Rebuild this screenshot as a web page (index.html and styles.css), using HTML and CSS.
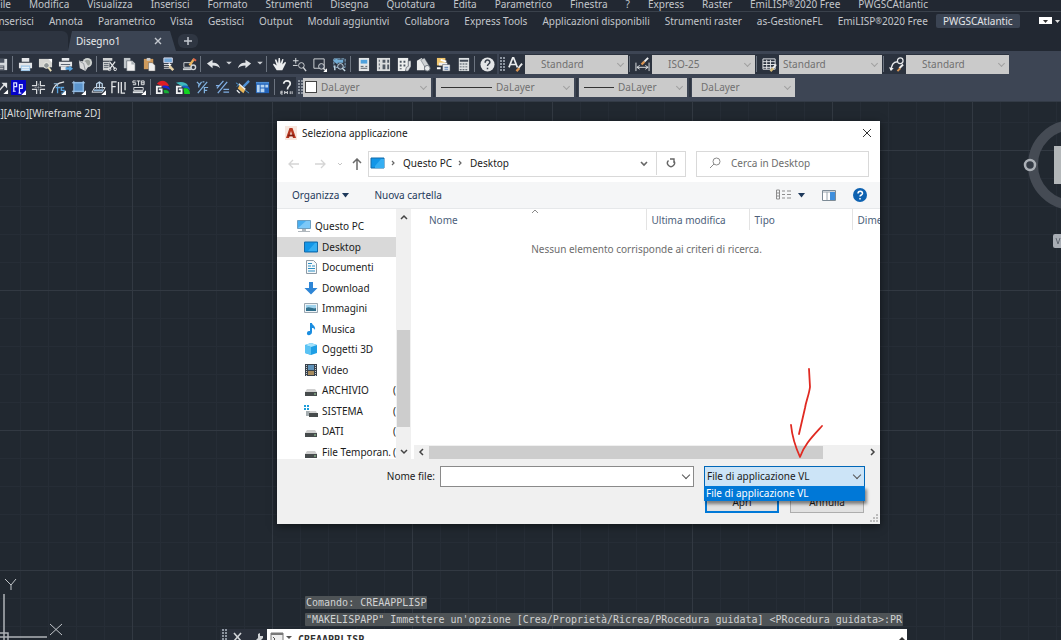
FILE: index.html
```html
<!DOCTYPE html>
<html lang="it">
<head>
    <meta charset="UTF-8">
    <meta name="viewport" content="width=device-width, initial-scale=1.0">
    <title>Seleziona applicazione</title>
    <link rel="stylesheet" href="styles.css">
</head>
<body>
    <header class="app-header">
        <nav class="menu-bar">
            <a href="#">File</a><a href="#">Modifica</a><a href="#">Visualizza</a><a href="#">Inserisci</a><a href="#">Formato</a><a href="#">Strumenti</a><a href="#">Disegna</a><a href="#">Quotatura</a><a href="#">Edita</a><a href="#">Parametrico</a><a href="#">Finestra</a><a href="#">?</a><a href="#">Express</a><a href="#">Raster</a><a href="#">EmiLISP<small>®</small>2020 Free</a><a href="#">PWGSCAtlantic</a>
        </nav>
        <nav class="ribbon-tabs">
            <a href="#">Inserisci</a><a href="#">Annota</a><a href="#">Parametrico</a><a href="#">Vista</a><a href="#">Gestisci</a><a href="#">Output</a><a href="#">Moduli aggiuntivi</a><a href="#">Collabora</a><a href="#">Express Tools</a><a href="#">Applicazioni disponibili</a><a href="#">Strumenti raster</a><a href="#">as-GestioneFL</a><a href="#">EmiLISP<small>®</small>2020 Free</a><a href="#" class="active">PWGSCAtlantic</a>
            <button class="ribbon-toggle" aria-label="Riduci barra multifunzione">
                <svg width="22" height="8" viewBox="0 0 22 8"><rect width="13" height="7" fill="#fff"/><path d="M4 3h5l-2.500 3z" fill="#333"/><path d="M16 3h5l-2.500 3z" fill="#ddd"/></svg>
            </button>
        </nav>
        <div class="file-tabs">
            <div class="tab-start"></div>
            <div class="file-tab">
                <span>Disegno1</span>
                <button aria-label="Chiudi disegno"><svg width="8" height="8" viewBox="0 0 8 8"><path d="M1 1l6 6M7 1L1 7" stroke="#c3c8cf" stroke-width="1.400"/></svg></button>
            </div>
            <button class="new-tab" aria-label="Nuovo disegno"><svg width="8" height="8" viewBox="0 0 8 8"><path d="M4 0v8M0 4h8" stroke="#c3c8cf" stroke-width="1.500"/></svg></button>
        </div>
    </header>

    <div class="toolbars">
        <div class="tool-row">
            <div class="tools">
                <button class="tool cut-off" aria-label="Salva"><svg viewBox="0 0 16 16"><path d="M1 2h13v12H1z" fill="#d5d9dd"/><path d="M4 2h7v4H4zM4 9h7v5H4z" fill="#4a5260"/><path d="M5 10h5v1H5zM5 12h5v1H5z" fill="#ddd"/></svg></button>
                <i class="sep"></i>
                <button class="tool" aria-label="Stampa"><svg viewBox="0 0 16 16"><path d="M4 1h8v4H4zM1 6h14v6H1z" fill="#e4e6e8"/><path d="M3 9h10v6H3z" fill="#9fc6e6"/><path d="M4 11h8M4 13h8" stroke="#fff"/></svg></button>
                <button class="tool" aria-label="Anteprima di stampa"><svg viewBox="0 0 16 16"><path d="M1 2h14v9H1z" fill="#d6d6d2"/><path d="M11 2l4 4V2z" fill="#fff"/><circle cx="9" cy="9" r="3" fill="#8f9596" stroke="#f0f0e8"/><path d="M11 11l3 4" stroke="#e6dcb4" stroke-width="2"/></svg></button>
                <button class="tool" aria-label="Pubblica"><svg viewBox="0 0 16 16"><path d="M4 1h8v3H4zM1 5h14v5H1z" fill="#e4e6e8"/><path d="M3 8h10" stroke="#525c69"/><path d="M3 10h6v4H3z" fill="#e4e6e8"/><path d="M8 11h4V9l4 3.500-4 3V13.500H8z" fill="#5aa5e0"/></svg></button>
                <button class="tool" aria-label="Stampa 3D"><svg viewBox="0 0 16 16"><circle cx="10" cy="6" r="5" fill="#cfd3d0"/><circle cx="10" cy="6" r="3" fill="#9ca19d"/><path d="M1 4l7 1 3 5-3 5-6-3z" fill="#d9dadb"/><path d="M1 4l5 3 2 8" stroke="#8c9297" fill="none"/></svg></button>
                <i class="sep"></i>
                <button class="tool" aria-label="Taglia"><svg viewBox="0 0 16 16"><path d="M1 1h10v3H1zM1 5h7v9H1z" fill="#d0d2d3"/><path d="M2 7h5M2 9h5M2 11h5" stroke="#59616c"/><path d="M8 5l6 8M14 5l-6 8" stroke="#e6e8ea" stroke-width="1.300"/><circle cx="8" cy="13" r="1.500" fill="none" stroke="#e6e8ea"/><circle cx="14" cy="13" r="1.500" fill="none" stroke="#e6e8ea"/></svg></button>
                <button class="tool" aria-label="Copia"><svg viewBox="0 0 16 16"><path d="M2 1h7v11H2z" fill="#bfc4c8"/><path d="M5 4h6l3 3v8H5z" fill="#f0f0f0" stroke="#444c58" stroke-width=".6"/><path d="M10 4v4h4" fill="#aab0b5"/></svg></button>
                <button class="tool" aria-label="Incolla"><svg viewBox="0 0 16 16"><path d="M2 2h10v11H2z" fill="#cf9a5c"/><path d="M5 1h4v3H5z" fill="#ccc"/><path d="M7 6h4l3 3v6H7z" fill="#f0f0f0" stroke="#555" stroke-width=".5"/></svg></button>
                <button class="tool" aria-label="Corrispondenza proprietà"><svg viewBox="0 0 16 16"><path d="M2 1h9v5H2z" fill="#74a9d9" stroke="#dde" /><path d="M2 8h8M2 10h8M2 12h7" stroke="#e0e0e0"/><path d="M8 8l5 5-2 2-4-4z" fill="#e7d2a6"/><path d="M7 7l2 2" stroke="#fff" stroke-width="2"/></svg></button>
                <button class="tool" aria-label="Editor blocchi"><svg viewBox="0 0 16 16"><path d="M2 6h8v5H2z" fill="none" stroke="#cfd3d6"/><path d="M1 13h9" stroke="#cfd3d6" stroke-width="2"/><circle cx="12" cy="11" r="2.500" fill="none" stroke="#cfd3d6" stroke-width="1.500"/><path d="M8 9l5-7" stroke="#e8b25c" stroke-width="2.500"/><path d="M12 2l3 2" stroke="#e0654a" stroke-width="2"/></svg></button>
                <i class="sep"></i>
                <button class="tool" aria-label="Annulla ultimo"><svg viewBox="0 0 16 16"><path d="M1 7l6-4v3c5 0 7 2 8 6-2-2-4-3-8-3v3z" fill="#e0e3e6"/></svg></button>
                <button class="tool narrow" aria-label="Elenco annulla"><svg viewBox="0 0 8 16"><path d="M1 5h6L4 8z" fill="#cdd1d6"/></svg></button>
                <button class="tool" aria-label="Ripeti"><svg viewBox="0 0 16 16"><path d="M15 7L9 3v3C4 6 2 8 1 12c2-2 4-3 8-3v3z" fill="#e0e3e6"/></svg></button>
                <button class="tool narrow" aria-label="Elenco ripeti"><svg viewBox="0 0 8 16"><path d="M1 5h6L4 8z" fill="#cdd1d6"/></svg></button>
                <i class="sep"></i>
                <button class="tool" aria-label="Pan"><svg viewBox="0 0 16 16"><path d="M5 14L1 8l1-1 3 2-2-6 1.500-.5L6.500 7 7 1h1.500l.5 6 2-5 1.300.5L11 8l3-3 1 1-4 8z" fill="#eceeef"/></svg></button>
                <button class="tool" aria-label="Zoom tempo reale"><svg viewBox="0 0 16 16"><path d="M1 4h6M4 1v6M1 9h5" stroke="#e0e3e6"/><circle cx="10" cy="9" r="3" fill="none" stroke="#d3d6da"/><path d="M12 11l3 4" stroke="#d3d6da" stroke-width="1.500"/></svg></button>
                <button class="tool" aria-label="Zoom finestra"><svg viewBox="0 0 16 16"><path d="M2 2h11v10H2z" fill="none" stroke="#d3d6da"/><circle cx="10" cy="10" r="3" fill="#3a4352" stroke="#d3d6da"/><path d="M12 12l3 3" stroke="#d3d6da" stroke-width="1.500"/><path d="M16 12v4h-4z" fill="#fff"/></svg></button>
                <button class="tool" aria-label="Zoom precedente"><svg viewBox="0 0 16 16"><path d="M2 2h12v9H2z" fill="none" stroke="#8fb9d6" stroke-dasharray="3 1"/><path d="M1 4l5-3v2h6v3H6v2z" fill="#71add5"/><circle cx="9" cy="10" r="3" fill="#3a4352" stroke="#c8dce8"/><path d="M11 12l3 3M3 9v5" stroke="#c8dce8" stroke-width="1.500"/></svg></button>
                <i class="sep"></i>
                <button class="tool" aria-label="Proprietà"><svg viewBox="0 0 16 16"><path d="M3 1h11v14H3z" fill="#e2e5e7"/><path d="M5 3h7v4H5z" fill="#4fa1dd"/><path d="M5 10h3M10 10h2M5 12h7" stroke="#4d5661"/></svg></button>
                <button class="tool" aria-label="DesignCenter"><svg viewBox="0 0 16 16"><path d="M1 1h14v14H1z" fill="#d9dbdc"/><path d="M3 3h1v2H3zM3 7h1v2H3zM3 11h1v2H3zM7 3h3v3H7zM12 3h2v3h-2zM7 8h3v5H7zM12 8h2v5h-2z" fill="#505964"/></svg></button>
                <button class="tool" aria-label="Tavolozze degli strumenti"><svg viewBox="0 0 16 16"><path d="M2 1h11v14H2z" fill="#eceeee"/><path d="M4 4h2v2H4zM8 4h2v2H8zM4 8h2v2H4zM8 8h2v2H8zM4 12h2v1H4z" fill="#4d5661"/><path d="M10 15l1-4 2-1V4h3v6l-3 5z" fill="#dfe2e4" stroke="#39414d" stroke-width=".6"/></svg></button>
                <button class="tool" aria-label="Gestione gruppi di fogli"><svg viewBox="0 0 16 16"><path d="M1 4l5-3 3 4v9H1z" fill="#eceded"/><path d="M5 3l4-2 6 10-3 4z" fill="#cfd2d4" stroke="#4b535f" stroke-width=".5"/><circle cx="12" cy="12" r="3" fill="#e7e9ea" stroke="#6a717a"/></svg></button>
                <button class="tool" aria-label="Gestione marcature"><svg viewBox="0 0 16 16"><path d="M1 1h9v8H1z" fill="#f0c56c"/><path d="M3 6h9v3H3z" fill="#eee"/><path d="M7 8h8v7H7z" fill="#e9ebee" stroke="#39414d" stroke-width=".5"/><path d="M9 11h4M9 13h4" stroke="#4a72ab"/><path d="M1 12h4M5 3l6 2" stroke="#fff" stroke-width="2"/></svg></button>
                <button class="tool" aria-label="Calcolatrice"><svg viewBox="0 0 16 16"><path d="M3 1h11v14H3z" fill="#dde0e2"/><path d="M4 3h9v2H4zM4 7h2v1H4zM7 7h2v1H7zM10 7h2v1h-2zM4 10h2v1H4zM7 10h2v1H7zM10 10h2v1h-2zM4 13h2v1H4zM7 13h2v1H7zM10 13h2v1h-2z" fill="#414a57"/></svg></button>
                <i class="sep"></i>
                <button class="tool" aria-label="Guida"><svg viewBox="0 0 16 16"><circle cx="8" cy="8" r="7.500" fill="#e3e5e7"/><path d="M5.500 6c0-3.500 5-3.500 5-.5 0 2-2.500 2-2.500 4M8 11.500v1.500" stroke="#39414d" stroke-width="1.600" fill="none"/></svg></button>
            </div>
            <div class="tools">
                <i class="grip"></i>
                <button class="tool" aria-label="Stile testo"><svg viewBox="0 0 16 16"><path d="M1 11L5 1h1l4 10M3 8h5" stroke="#e8eaec" stroke-width="1.800" fill="none"/><path d="M11 12l4-5" stroke="#e8eaec" stroke-width="2"/><path d="M9 15l3-3" stroke="#d99452" stroke-width="2.500"/></svg></button>
                <div class="combo"><select class="indent" aria-label="Stile testo corrente"><option>Standard</option></select></div>
                <i class="sep"></i>
                <button class="tool" aria-label="Stile di quota"><svg viewBox="0 0 16 16"><path d="M1 6v9M15 6v9M2 11h12M5 9l-3 2 3 2M11 9l3 2-3 2" stroke="#dfe2e5" fill="none"/><path d="M10 5l4-4" stroke="#eee" stroke-width="2"/><path d="M7 8l3-3" stroke="#d99452" stroke-width="2.500"/></svg></button>
                <div class="combo"><select class="indent" aria-label="Stile di quota corrente"><option>ISO-25</option></select></div>
                <i class="sep"></i>
                <button class="tool" aria-label="Stile tabella"><svg viewBox="0 0 16 16"><path d="M1 2h13v11H1zM1 5h13M1 8h13M1 11h13M5 3v10M9 3v10" stroke="#e8eaec" fill="none"/><path d="M11 13l4-5" stroke="#eee" stroke-width="2"/><path d="M9 15l3-3" stroke="#d8bd78" stroke-width="2.500"/></svg></button>
                <div class="combo"><select aria-label="Stile tabella corrente"><option>Standard</option></select></div>
                <i class="sep"></i>
                <button class="tool" aria-label="Stile direttrice"><svg viewBox="0 0 16 16"><path d="M2 14c1-5 2-9 7-9" stroke="#e8eaec" fill="none" stroke-width="1.500"/><path d="M0 11l2 4 3-3" fill="#eee"/><circle cx="12" cy="4" r="3" stroke="#e8eaec" fill="none" stroke-width="1.300"/><path d="M11 12l4-4" stroke="#eee" stroke-width="2"/><path d="M9 15l3-3" stroke="#d99452" stroke-width="2"/></svg></button>
                <div class="combo"><select class="indent" aria-label="Stile direttrice corrente"><option>Standard</option></select></div>
            </div>
        </div>

        <div class="tool-row">
            <div class="tools">
                <button class="tool cut-off" aria-label="Direttrice"><svg viewBox="0 0 16 16"><path d="M4 13l8-9" stroke="#ddd" stroke-width="1.500"/><path d="M8 3h6v6z" fill="#e4e6e8"/><path d="M15 10v5h-5z" fill="#fff"/></svg></button>
                <button class="tool after-cut" aria-label="Polilinee"><svg viewBox="0 0 16 16"><path d="M0 0h16v16H0z" fill="#0503c8"/><path d="M3 12V3h3v4H3M9 14V5h3v4H9M2 12h3M8 14h3" stroke="#dfe3ff" fill="none" stroke-width="1.300"/><path d="M16 11v5h-5z" fill="#fff"/></svg></button>
                <button class="tool" aria-label="Interseca muri"><svg viewBox="0 0 16 16"><path d="M1 6h5V1M10 1v5h5M1 10h5v5M10 15v-5h5" stroke="#d9dcdf" fill="none" stroke-width="1.300"/><path d="M8 4v8M4 8h8" stroke="#aab0b6" stroke-dasharray="1 1"/></svg></button>
                <button class="tool" aria-label="Testo su arco"><svg viewBox="0 0 16 16"><path d="M1 14C2 7 7 3 14 2" stroke="#dfe2e5" fill="none" stroke-width="1.300"/><path d="M5 8h5M7 8v6M14 8h-3v3h3v3h-3" stroke="#58a2df" fill="none" stroke-width="1.400"/><path d="M3 4h4v3" stroke="#9dc6e8" fill="none"/><path d="M16 11v5h-5z" fill="#fff"/></svg></button>
                <button class="tool" aria-label="Tratteggio"><svg viewBox="0 0 16 16"><path d="M3 2h11v11H3z" fill="#5b94cc"/><path d="M1 3h14M3 1v14M13 1v12M1 12h12" stroke="#a7cbed"/><path d="M16 11v5h-5z" fill="#fff"/></svg></button>
                <button class="tool" aria-label="Piano di lavoro"><svg viewBox="0 0 16 16"><path d="M4 8h11l-3 5H1z" fill="none" stroke="#dfe2e5"/><path d="M6 9V4l3-2 3 2v5M9 3v6" fill="none" stroke="#bdd6ec" stroke-width="1.300"/><path d="M3 11h10" stroke="#8fb4d6" stroke-width="2"/><path d="M16 11v5h-5z" fill="#fff"/></svg></button>
                <button class="tool" aria-label="Allinea testo"><svg viewBox="0 0 16 16"><path d="M1 14V2h5M1 7h4M8 2v12M11 2v12h4M15 2v9" fill="none" stroke="#e4e6e8" stroke-width="1.400"/></svg></button>
                <button class="tool" aria-label="Stile di stampa"><svg viewBox="0 0 16 16"><path d="M5 1H2v2h3v2H2M6 1h4M8 1v5M11 1v4h3V1zM11 3h3" fill="none" stroke="#e4e6e8"/><path d="M3 8h10v3H3z" fill="none" stroke="#dfe2e5"/><path d="M2 12h11v2H2z" fill="#dfe2e5"/><path d="M16 11v5h-5z" fill="#fff"/></svg></button>
                <i class="sep wide"></i>
                <button class="tool" aria-label="Gruppo colori"><svg viewBox="0 0 16 16"><path d="M2 4c4-5 10-4 13 2L8 7z" fill="#df1d25"/><path d="M8 6c5-1 8 1 8 5-2-2-5-3-8-3z" fill="#1625d7"/><path d="M9 11c3-1 6 0 6 3h-5z" fill="#17af36"/><path d="M7 7H2v7h5v-4H4" stroke="#f0f1f2" fill="none" stroke-width="2"/></svg></button>
                <button class="tool" aria-label="Gruppo livelli"><svg viewBox="0 0 16 16"><path d="M1 3c5-2 11-1 13 3L8 7z" fill="#3eb9bd"/><path d="M8 6c5-1 8 1 8 5-2-2-5-3-8-3z" fill="#1663c3"/><path d="M9 9c4-1 7 1 7 6h-6z" fill="#12d520"/><path d="M7 7H2v7h5v-4H4" stroke="#f0f1f2" fill="none" stroke-width="2"/></svg></button>
                <button class="tool" aria-label="Converti testo"><svg viewBox="0 0 16 16"><path d="M2 2l3 3 2-3M4 5v3M3 14L13 2M10 14V8h4M10 11h3M8 2h2" stroke="#81b2e0" fill="none" stroke-width="1.300"/></svg></button>
                <button class="tool" aria-label="Uguaglia"><svg viewBox="0 0 16 16"><path d="M2 9l7-8M3 14L13 2M1 6h4M9 10h6M9 13h6" stroke="#80aee3" fill="none" stroke-width="1.400"/></svg></button>
                <button class="tool" aria-label="Pulisci"><svg viewBox="0 0 16 16"><path d="M15 1L9 7" stroke="#4e92d8" stroke-width="2.500"/><path d="M5 5l6 5-2 4-6-5z" fill="#e9b75a"/><path d="M4 4l7 6M2 11l3 3" stroke="#eceeef" stroke-width="1.500"/><path d="M1 3l3 2-2 2M11 11l4 3" stroke="#52a1dd" fill="none"/></svg></button>
                <button class="tool" aria-label="Tabella"><svg viewBox="0 0 16 16"><path d="M1 2h14v12H1z" fill="#2263ba"/><path d="M2 5h3v8H2zM6 5h4v3H6zM11 5h3v3h-3zM6 9h4v4H6z" fill="#b5d4f1"/><path d="M1 3h14" stroke="#68a6e2"/></svg></button>
                <i class="sep wide"></i>
                <button class="tool" aria-label="Guida EmiLISP"><svg viewBox="0 0 16 16"><path d="M5 4c0-4 7-4 7 0 0 3-3 2-3 6" stroke="#eceeef" stroke-width="1.800" fill="none"/><path d="M4 12H2v3h2M2 13.500h2M6 15v-3l1.500 2L9 12v3M12 12v3M14 12v3" stroke="#d6d9dc" fill="none"/></svg></button>
            </div>
            <div class="property-tools">
                <i class="grip"></i>
                <div class="combo layer-color"><i class="swatch"></i><select aria-label="Colore"><option>DaLayer</option></select></div>
                <i class="divider"></i>
                <div class="combo line-type"><i class="line"></i><select aria-label="Tipo di linea"><option>DaLayer</option></select></div>
                <i class="divider"></i>
                <div class="combo line-weight"><i class="line"></i><select aria-label="Spessore di linea"><option>DaLayer</option></select></div>
                <i class="divider"></i>
                <div class="combo"><select class="plot" aria-label="Stile di stampa"><option>DaLayer</option></select></div>
            </div>
        </div>
    </div>

    <main class="drawing">
        <div class="view-label">[-][Alto][Wireframe 2D]</div>

        <svg class="view-cube" width="40" height="132" viewBox="0 0 40 132">
            <circle cx="52" cy="46" r="40" fill="none" stroke="#454b54" stroke-width="10"/>
            <circle cx="9" cy="46" r="5" fill="#343b45" stroke="#abb0b6" stroke-width="2.500"/>
            <path d="M33 27h7v38h-7z" fill="#b3b7b9"/>
            <rect x="32" y="115" width="14" height="14" rx="2" fill="#a8adb4"/>
            <path d="M35 119l2 6 2-6" fill="none" stroke="#606770"/>
        </svg>

        <svg class="ucs" width="66" height="66" viewBox="0 0 66 66">
            <path d="M4 20v46M0 63h47M0 59h8v7" fill="none" stroke="#aeb2b6" stroke-width="1.500"/>
            <path d="M5 5l6 6 5-6M11 11v5M50 50l12 11M62 50L50 61" fill="none" stroke="#c0c4c8"/>
        </svg>

        <div class="history">
            <p>Comando: CREAAPPLISP</p>
            <p>"MAKELISPAPP" Immettere un'opzione [Crea/Proprietà/Ricrea/PRocedura guidata] &lt;PRocedura guidata&gt;:PR</p>
        </div>
        <div class="command-line">
            <div class="command-handle">
                <i class="grip"></i>
                <svg width="30" height="12" viewBox="0 0 30 12"><path d="M1 2l7 8M8 2l-7 8" stroke="#d0d3d6" stroke-width="1.600"/><path d="M21 11l4-4V3l2-1v3h3v2l-5 5z" fill="#d0d3d6"/></svg>
            </div>
            <svg width="23" height="12" viewBox="0 0 23 12"><path d="M1 2h12v10H1z" fill="#eee" stroke="#777"/><path d="M1 3h12" stroke="#777" stroke-width="2"/><path d="M3 6l2 2-2 2" fill="none" stroke="#555"/><path d="M16 5h6l-3 3z" fill="#555"/></svg>
            <input type="text" value="CREAAPPLISP" aria-label="Riga di comando">
            <svg class="expand" width="9" height="12" viewBox="0 0 9 12"><path d="M1 9l3-3 3 3z" fill="#333"/></svg>
        </div>
    </main>

    <section class="dialog" role="dialog" aria-labelledby="dialogTitle">
        <div class="title-bar">
            <svg width="12" height="14" viewBox="0 0 12 14"><path d="M0 0h12v14H0z" fill="#f7e7df"/><path d="M1 12L4.500 2h3L11 12H8L6 5l-2 7z" fill="#b5351f"/><path d="M3 9.500h6" stroke="#7e1e12" stroke-width="1.800"/></svg>
            <h1 id="dialogTitle">Seleziona applicazione</h1>
            <button aria-label="Chiudi"><svg width="10" height="10" viewBox="0 0 10 10"><path d="M1 1l8 8M9 1L1 9" stroke="#333"/></svg></button>
        </div>

        <div class="nav-bar">
            <button aria-label="Indietro"><svg width="12" height="12" viewBox="0 0 12 12"><path d="M11 6H1M5 2L1 6l4 4" fill="none" stroke="#d5d5d5" stroke-width="1.300"/></svg></button>
            <button aria-label="Avanti"><svg width="12" height="12" viewBox="0 0 12 12"><path d="M1 6h10M7 2l4 4-4 4" fill="none" stroke="#d5d5d5" stroke-width="1.300"/></svg></button>
            <button class="small" aria-label="Percorsi recenti"><svg width="6" height="6" viewBox="0 0 6 6"><path d="M1 2l2 2 2-2" fill="none" stroke="#c5c5c5"/></svg></button>
            <button aria-label="Su"><svg width="12" height="12" viewBox="0 0 12 12"><path d="M6 12V1M2 5l4-4 4 4" fill="none" stroke="#6a6a6a" stroke-width="1.500"/></svg></button>
            <div class="address">
                <svg width="15" height="13" viewBox="0 0 15 13"><path d="M1 1h13v10H1z" fill="#1296e8" stroke="#156aa8"/><path d="M5 9l6-7h3v9H5z" fill="#35aef2"/></svg>
                <svg class="crumb" width="6" height="8" viewBox="0 0 6 8"><path d="M1 2l2 2-2 2" fill="none" stroke="#666" stroke-width="1.200"/></svg>
                <a href="#">Questo PC</a>
                <svg class="crumb" width="6" height="8" viewBox="0 0 6 8"><path d="M1 2l2 2-2 2" fill="none" stroke="#666" stroke-width="1.200"/></svg>
                <a href="#">Desktop</a>
                <button class="history-toggle" aria-label="Posizioni precedenti"><svg width="10" height="8" viewBox="0 0 10 8"><path d="M2 3l3 3 3-3" fill="none" stroke="#666" stroke-width="1.600"/></svg></button>
                <button class="refresh" aria-label="Aggiorna"><svg width="12" height="12" viewBox="0 0 12 12"><path d="M4 3a4 4 0 1 0 5 1M4 1v3.500h4" transform="matrix(-1 0 0 1 12 0)" fill="none" stroke="#666" stroke-width="1.300" visibility="hidden"/><path d="M8.500 3.500a3.500 3.500 0 1 1-5 0M5 2h4v4" fill="none" stroke="#666" stroke-width="1.400"/></svg></button>
            </div>
            <div class="search">
                <svg width="12" height="12" viewBox="0 0 12 12"><circle cx="7.500" cy="4.500" r="3.500" fill="none" stroke="#8a8a8a"/><path d="M5 7l-4 4" stroke="#8a8a8a"/></svg>
                <input type="text" placeholder="Cerca in Desktop" aria-label="Cerca in Desktop">
            </div>
        </div>

        <div class="command-bar">
            <button>Organizza <svg width="7" height="5" viewBox="0 0 7 5"><path d="M0 0h7L3.500 4.500z" fill="#1e395b"/></svg></button>
            <button class="new-folder">Nuova cartella</button>
            <button class="view" aria-label="Cambia visualizzazione">
                <svg width="15" height="12" viewBox="0 0 15 12"><path d="M.5 1h3v9h-3zM.5 4h3M.5 7h3M6 2h3M6 5.500h3M6 9h3M11 2h4M11 5.500h4M11 9h4" fill="none" stroke="#8d8d8d"/></svg>
                <svg width="7" height="5" viewBox="0 0 7 5"><path d="M0 0h7L3.500 4.500z" fill="#1e395b"/></svg>
            </button>
            <button aria-label="Riquadro anteprima"><svg width="14" height="11" viewBox="0 0 14 11"><path d="M.5.5h13v10H.5z" fill="#fff" stroke="#7d8b96"/><path d="M1 2h12M5 2v8" stroke="#9aa5ae"/><path d="M8 2h5v8H8z" fill="#3f8fdd"/></svg></button>
            <button aria-label="Guida"><svg width="14" height="14" viewBox="0 0 14 14"><circle cx="7" cy="7" r="7" fill="#0e62b1"/><path d="M5 5.500c0-3 4.500-3 4.500 0C9.500 7 7 7 7 8.500M7 10v1.500" fill="none" stroke="#fff" stroke-width="1.500"/></svg></button>
        </div>

        <div class="browser">
            <nav class="sidebar">
                <ul>
                    <li class="root"><svg viewBox="0 0 14 14"><path d="M.5 1.500h13v8H.5z" fill="#48aef0" stroke="#6e9fc0"/><path d="M1 9l8-7h4v7z" fill="#7cc8f8"/><path d="M5 10h4v2H5zM1 12h12v1H1z" fill="#b0b7bd"/></svg><a href="#">Questo PC</a></li>
                    <li class="selected"><svg viewBox="0 0 14 14"><path d="M.5 2h13v10H.5z" fill="#1296e8" stroke="#156aa8"/><path d="M4 11l7-8h2v8z" fill="#35aef2"/></svg><a href="#">Desktop</a></li>
                    <li><svg viewBox="0 0 14 14"><path d="M2.500.5h7l3 3v10h-10z" fill="#f6f9fb" stroke="#8d9aa5"/><path d="M4 3.500h4M4 6h3M8 6h3M4 8.500h7M4 11h7" stroke="#2c8fc4"/></svg><a href="#">Documenti</a></li>
                    <li><svg viewBox="0 0 14 14"><path d="M5 1h4v6h4.500L7 13.500.5 7H5z" fill="#2e86d6"/></svg><a href="#">Download</a></li>
                    <li><svg viewBox="0 0 14 14"><path d="M.5 2.500h13v9H.5z" fill="#eef4f8" stroke="#9aa7b1"/><path d="M2 4h10v3H2z" fill="#9fd2ec"/><path d="M2 7c4-2 5 1 10 0v3H2z" fill="#31708d"/></svg><a href="#">Immagini</a></li>
                    <li><svg viewBox="0 0 14 14"><path d="M6 1h2c0 2 4 3 3 7-1-2-2-2-3-2v4c0 4-6 4-5 1 0-2 2-2 3-2z" fill="#1a8de0"/></svg><a href="#">Musica</a></li>
                    <li><svg viewBox="0 0 14 14"><path d="M1 3l6-2 6 2v8l-6 2-6-2z" fill="#1f9fe5"/><path d="M1 3l6 2 6-2-6-2z" fill="#a4e2fb"/><path d="M1 3l6 2v8l-6-2z" fill="#5bc3f4"/></svg><a href="#">Oggetti 3D</a></li>
                    <li><svg viewBox="0 0 14 14"><path d="M1 1h12v12H1z" fill="#39424c"/><path d="M4 2h6v5H4z" fill="#5e92b9"/><path d="M4 8h6v4H4z" fill="#a78b5d"/><path d="M2.500 2v11M11.500 2v11" stroke="#c9d0d6" stroke-dasharray="1 1"/></svg><a href="#">Video</a></li>
                    <li><svg viewBox="0 0 14 14"><path d="M3 6h8l2 3H1z" fill="#cfcfcf"/><path d="M1 9h12v4H1z" fill="#464b4c"/><path d="M10 11h2" stroke="#a1d8a1"/></svg><a href="#">ARCHIVIO</a><span>(A:)</span></li>
                    <li><svg viewBox="0 0 14 14"><path d="M0 1h2v2H0zM3 1h2v2H3zM0 4h2v2H0zM3 4h2v2H3z" fill="#1c9edb"/><path d="M2 7h4v5H2z" fill="#a5adb0"/><path d="M6 7h6l1 2H5z" fill="#cfcfcf"/><path d="M5 9h9v4H5z" fill="#464b4c"/></svg><a href="#">SISTEMA</a><span>(C:)</span></li>
                    <li><svg viewBox="0 0 14 14"><path d="M3 6h8l2 3H1z" fill="#cfcfcf"/><path d="M1 9h12v4H1z" fill="#464b4c"/><path d="M10 11h2" stroke="#a1d8a1"/></svg><a href="#">DATI</a><span>(J:)</span></li>
                    <li><svg viewBox="0 0 14 14"><path d="M3 6h8l2 3H1z" fill="#cfcfcf"/><path d="M1 9h12v4H1z" fill="#464b4c"/><path d="M10 11h2" stroke="#a1d8a1"/></svg><a href="#">File Temporan.</a><span>(K:)</span></li>
                </ul>
            </nav>
            <div class="v-scroll">
                <svg width="8" height="6" viewBox="0 0 8 6"><path d="M1 5l3-3 3 3" fill="none" stroke="#444" stroke-width="1.500"/></svg>
                <div class="v-thumb"></div>
                <svg width="8" height="6" viewBox="0 0 8 6"><path d="M1 1l3 3 3-3" fill="none" stroke="#444" stroke-width="1.500"/></svg>
            </div>
            <div class="files">
                <div class="file-list">
                    <svg class="sort" width="8" height="5" viewBox="0 0 8 5"><path d="M1 4l3-3 3 3" fill="none" stroke="#8a8a8a"/></svg>
                    <table>
                        <thead>
                            <tr><th class="name">Nome</th><th class="date">Ultima modifica</th><th class="date">Tipo</th><th>Dimensione</th></tr>
                        </thead>
                        <tbody>
                            <tr><td colspan="4">Nessun elemento corrisponde ai criteri di ricerca.</td></tr>
                        </tbody>
                    </table>
                </div>
                <div class="h-scroll">
                    <svg width="6" height="8" viewBox="0 0 6 8"><path d="M5 1L2 4l3 3" fill="none" stroke="#444" stroke-width="1.500"/></svg>
                    <div class="h-thumb"></div>
                    <svg width="6" height="8" viewBox="0 0 6 8"><path d="M1 1l3 3-3 3" fill="none" stroke="#444" stroke-width="1.500"/></svg>
                </div>
            </div>
        </div>

        <form class="dialog-footer">
            <label for="fileName">Nome file:</label>
            <div class="field"><input type="text" id="fileName"></div>
            <div class="field type-field">
                <select aria-label="Tipo file"><option>File di applicazione VL</option></select>
                <ul class="type-list"><li>File di applicazione VL</li></ul>
            </div>
            <div class="buttons">
                <button type="button" class="primary">Apri</button>
                <button type="button">Annulla</button>
            </div>
            <svg class="resize" width="8" height="8" viewBox="0 0 8 8"><path d="M6 0h2v2H6zM3 3h2v2H3zM6 3h2v2H6zM0 6h2v2H0zM3 6h2v2H3zM6 6h2v2H6z" fill="#bcbcbc"/></svg>
        </form>

        <svg class="arrow" width="36" height="94" viewBox="0 0 36 94"><path d="M20 2l1 18c-1 8-4 14-5 21l-6 26M2 58c1 10 4 21 9 32 4-12 12-20 22-31" fill="none" stroke="#e02a22" stroke-width="1.800" stroke-linecap="round" stroke-linejoin="round"/></svg>
    </section>
</body>
</html>
```
FILE: styles.css
```css
* {
    box-sizing: border-box;
}
body {
    margin: 0;
    height: 100vh;
    display: flex;
    flex-direction: column;
    overflow: hidden;
    position: relative;
    font-family: "Noto Sans", "Open Sans", sans-serif;
    font-size: 10px;
    line-height: 14px;
    background: #212830;
    color: #c3c6cb;
}
a {
    color: inherit;
    text-decoration: none;
    white-space: nowrap;
}
button {
    padding: 0;
    border: none;
    background: none;
    color: inherit;
    font: inherit;
}
input, select {
    font: inherit;
    color: inherit;
}
svg {
    display: block;
    flex-shrink: 0;
}

/* menu and tabs */
.app-header {
    background: #222832;
}
.app-header small {
    font-size: 8px;
    line-height: 8px;
    vertical-align: 1px;
}
.menu-bar {
    display: flex;
    gap: 18px;
    height: 12px;
    align-items: flex-end;
    margin-left: -5px;
    border-bottom: 1px solid #3a414b;
}
.ribbon-tabs {
    display: flex;
    gap: 15px;
    height: 19px;
    padding-bottom: 1px;
    align-items: center;
    margin-left: -5px;
}
.ribbon-tabs .active {
    background: #3b4453;
    color: #e4e6e9;
    padding: 0 7px;
    margin-left: -7px;
    border-radius: 2px;
}
.ribbon-toggle {
    margin-left: 4px;
}
.file-tabs {
    display: flex;
    height: 20px;
    align-items: stretch;
}
.tab-start {
    width: 68px;
    background: #2d3440;
    border-radius: 0 6px 0 0;
}
.file-tab {
    display: flex;
    align-items: center;
    justify-content: space-between;
    width: 108px;
    padding: 0 14px 0 8px;
    background: #3b4453;
    color: #e8eaec;
    clip-path: polygon(4px 0, 102px 0, 100% 100%, 0 100%);
}
.new-tab {
    width: 20px;
    margin: 3px 2px;
    display: flex;
    align-items: center;
    justify-content: center;
    background: #2f3642;
    border-radius: 6px;
}

/* toolbars */
.toolbars {
    display: flex;
    flex-direction: column;
    gap: 3px;
    padding: 3px 0 4px;
    background: #3d4554;
}
.tool-row, .tools, .property-tools {
    display: flex;
    align-items: center;
    height: 20px;
}
.tools {
    background: #2b323e;
}
.tool-row .tools:first-child {
    margin-right: 2px;
}
.tool {
    width: 20px;
    height: 20px;
    display: flex;
    align-items: center;
    justify-content: center;
}
.tool svg {
    width: 15px;
    height: 15px;
}
.tool.narrow {
    width: 11px;
}
.tool.narrow svg {
    width: 8px;
}
.tool.cut-off {
    margin-left: -9px;
}
.tool.after-cut {
    margin-left: -3px;
}
.sep {
    width: 4px;
    height: 16px;
    border-left: 1px solid #6c7480;
    margin-left: 1px;
    margin-right: -1px;
}
.sep.wide {
    margin-left: 2px;
    margin-right: -2px;
}
.grip {
    width: 5px;
    height: 14px;
    background: radial-gradient(circle at 1px 1px, #8d95a0 1px, transparent 1px) 0 0 / 3px 3px;
}
.combo {
    position: relative;
    display: flex;
    align-items: center;
    width: 103px;
    height: 19px;
    background: #cacaca;
    color: #707070;
}
.combo select {
    appearance: none;
    flex: 1;
    min-width: 0;
    height: 19px;
    padding: 0 4px;
    border: none;
    border-radius: 0;
    background: none;
}
.combo .indent {
    padding-left: 16px;
}
.combo .plot {
    padding-left: 9px;
}
.combo::after {
    content: "";
    position: absolute;
    right: 5px;
    top: 6px;
    width: 4px;
    height: 4px;
    border: solid #a0a0a0;
    border-width: 0 1px 1px 0;
    transform: rotate(45deg);
    pointer-events: none;
}
.tools .grip {
    margin-left: 1px;
}
.layer-color {
    width: 128px;
    padding-left: 2px;
}
.swatch {
    width: 12px;
    height: 12px;
    background: #fff;
    border: 1px solid #444;
}
.line {
    height: 1px;
    background: #333;
    margin-left: 5px;
}
.line-type {
    width: 138px;
}
.line-type .line {
    width: 51px;
}
.line-weight {
    width: 108px;
}
.line-weight .line {
    width: 30px;
}
.divider {
    width: 2px;
    height: 19px;
    margin: 0 1px 0 2px;
    background: #2e3541;
}

/* drawing area */
.drawing {
    flex: 1;
    position: relative;
    border-top: 1px solid #333b46;
    background-color: #212830;
    background-image:
        linear-gradient(90deg, #323942 1px, transparent 1px),
        linear-gradient(#323942 1px, transparent 1px),
        linear-gradient(90deg, #262d36 1px, transparent 1px),
        linear-gradient(#262d36 1px, transparent 1px);
    background-size: 140px 140px, 140px 140px, 28px 28px, 28px 28px;
    background-position: 132px 48px;
}
.view-label {
    margin: 4px 0 0 -6px;
    color: #d9dbdd;
}
.view-cube {
    position: absolute;
    right: 0;
    top: 17px;
}
.ucs {
    position: absolute;
    left: 0;
    bottom: 0;
}
.history {
    position: absolute;
    left: 305px;
    bottom: 14px;
    font-family: "DejaVu Sans Mono", monospace;
}
.history p {
    width: max-content;
    margin: 4px 0 0;
    padding: 0 1px;
    line-height: 13px;
    background: #4e5356;
    color: #d0d2d3;
    border-radius: 1px;
    white-space: pre;
}
.command-line {
    position: absolute;
    left: 220px;
    bottom: 0;
    width: 687px;
    height: 11px;
    display: flex;
    overflow: hidden;
    background: #fff;
}
.command-handle {
    display: flex;
    gap: 6px;
    width: 47px;
    padding-left: 2px;
    margin-right: 3px;
    background: #2a303b;
}
.command-line svg {
    margin-top: 2px;
}
.command-line input {
    flex: 1;
    height: 20px;
    border: none;
    padding: 2px 5px;
    font-family: "DejaVu Sans Mono", monospace;
    font-weight: bold;
    color: #333;
}

/* dialog */
.dialog {
    position: absolute;
    left: 277px;
    top: 121px;
    width: 603px;
    background: #fff;
    color: #1b1b1b;
    box-shadow: 0 2px 8px rgba(0, 0, 0, 0.5);
}
.title-bar {
    display: flex;
    align-items: center;
    gap: 5px;
    height: 24px;
    padding: 0 8px;
}
.title-bar h1 {
    flex: 1;
    margin: 0;
    font-size: 10px;
    font-weight: normal;
}
.nav-bar {
    display: flex;
    align-items: center;
    height: 37px;
    padding: 0 11px;
}
.nav-bar > button {
    margin-right: 14px;
}
.nav-bar > button:nth-child(2) {
    margin-right: 11px;
}
.nav-bar .small {
    margin-right: 8px;
}
.nav-bar > button:nth-child(4) {
    margin-right: 5px;
}
.address {
    display: flex;
    align-items: center;
    flex: 1;
    height: 26px;
    border: 1px solid #d9d9d9;
    padding: 0 0 1px 1px;
}
.crumb {
    margin: 0 6px;
}
.history-toggle {
    margin: 0 7px 0 auto;
}
.refresh {
    display: flex;
    align-items: center;
    justify-content: center;
    width: 29px;
    height: 24px;
    border-left: 1px solid #d9d9d9;
}
.search {
    display: flex;
    align-items: center;
    gap: 8px;
    width: 173px;
    height: 26px;
    margin-left: 10px;
    padding: 0 0 1px 12px;
    border: 1px solid #d9d9d9;
}
.search input {
    flex: 1;
    min-width: 0;
    border: none;
    outline: none;
}
.search input::placeholder {
    color: #6d6d6d;
    opacity: 1;
}
.command-bar {
    display: flex;
    align-items: center;
    height: 27px;
    padding: 0 13px 0 15px;
    background: #f5f6f7;
    border-bottom: 1px solid #e6e8ea;
    color: #1e395b;
}
.command-bar button {
    display: flex;
    align-items: center;
    gap: 3px;
    margin-right: 17px;
}
.command-bar button:last-child {
    margin-right: 0;
}
.command-bar .new-folder {
    margin-left: 8px;
}
.command-bar .view {
    margin-left: auto;
    gap: 7px;
}
.browser {
    display: flex;
    height: 250px;
}
.sidebar {
    width: 119px;
    padding-top: 7px;
    overflow: hidden;
}
.sidebar ul {
    display: flex;
    flex-direction: column;
    height: 246px;
    margin: 0;
    padding: 0;
    list-style: none;
}
.sidebar li {
    flex: 1;
    display: flex;
    align-items: center;
    gap: 4px;
    padding-left: 27px;
}
.sidebar li svg {
    width: 14px;
    height: 14px;
}
.sidebar .root {
    padding-left: 20px;
}
.sidebar .selected {
    background: #d9d9d9;
}
.sidebar a {
    flex-shrink: 0;
    width: 67px;
}
.sidebar span {
    white-space: nowrap;
}
.v-scroll {
    display: flex;
    flex-direction: column;
    align-items: center;
    width: 15px;
    padding: 5px 0 4px;
    background: #f0f0f0;
}
.v-thumb {
    width: 13px;
    height: 97px;
    margin: auto 0 22px;
    background: #cdcdcd;
}
.files {
    flex: 1;
    min-width: 0;
    display: flex;
    flex-direction: column;
}
.file-list {
    position: relative;
    flex: 1;
    overflow: hidden;
}
.sort {
    position: absolute;
    left: 120px;
    top: 0;
}
.file-list table {
    table-layout: fixed;
    width: 540px;
    border-collapse: collapse;
}
.file-list th {
    height: 21px;
    padding: 0 5px;
    border-left: 1px solid #e3e3e3;
    color: #4c607a;
    font-weight: normal;
    text-align: left;
}
.file-list .name {
    width: 235px;
    padding-left: 18px;
    border-left: none;
}
.file-list .date {
    width: 103px;
}
.file-list td {
    padding: 12px 69px 0 0;
    color: #6d6d6d;
    text-align: center;
}
.h-scroll {
    display: flex;
    align-items: center;
    height: 14px;
    margin-left: 3px;
    padding: 0 4px;
    background: #f0f0f0;
}
.h-thumb {
    width: 394px;
    height: 13px;
    margin: 0 auto 0 5px;
    background: #cdcdcd;
}
.dialog-footer {
    position: relative;
    display: grid;
    grid-template-columns: 158px 254px 161px;
    column-gap: 5px;
    padding: 7px 15px 11px 0;
    background: #f0f0f0;
}
.dialog-footer label {
    align-self: start;
    padding-top: 3px;
    text-align: right;
}
.field {
    position: relative;
    height: 21px;
}
.field input, .field select {
    appearance: none;
    width: 100%;
    height: 100%;
    padding: 0 2px 1px;
    border: 1px solid #8a8a8a;
    border-radius: 0;
    background: #fff;
}
.field::after {
    content: "";
    position: absolute;
    right: 5px;
    top: 6px;
    width: 5px;
    height: 5px;
    border: solid #555;
    border-width: 0 1px 1px 0;
    transform: rotate(45deg);
    pointer-events: none;
}
.type-field {
    margin-left: 5px;
    margin-right: -5px;
}
.type-field select {
    background: #cce4f7;
    border-color: #0067b8;
}
.type-list {
    position: absolute;
    z-index: 1;
    left: 0;
    top: 20px;
    width: 100%;
    margin: 0;
    padding: 0 2px 1px;
    list-style: none;
    line-height: 14px;
    background: #0078d7;
    color: #fff;
    box-shadow: 2px 3px 3px rgba(0, 0, 0, 0.45);
}
.buttons {
    grid-column: 3;
    display: flex;
    justify-content: space-between;
    margin: 4px -4px 0 6px;
}
.buttons button {
    width: 74px;
    height: 22px;
    background: #e1e1e1;
    border: 1px solid #adadad;
}
.buttons .primary {
    border: 2px solid #0078d7;
}
.resize {
    position: absolute;
    right: 2px;
    bottom: 2px;
}
.arrow {
    position: absolute;
    left: 512px;
    top: 246px;
}
```
